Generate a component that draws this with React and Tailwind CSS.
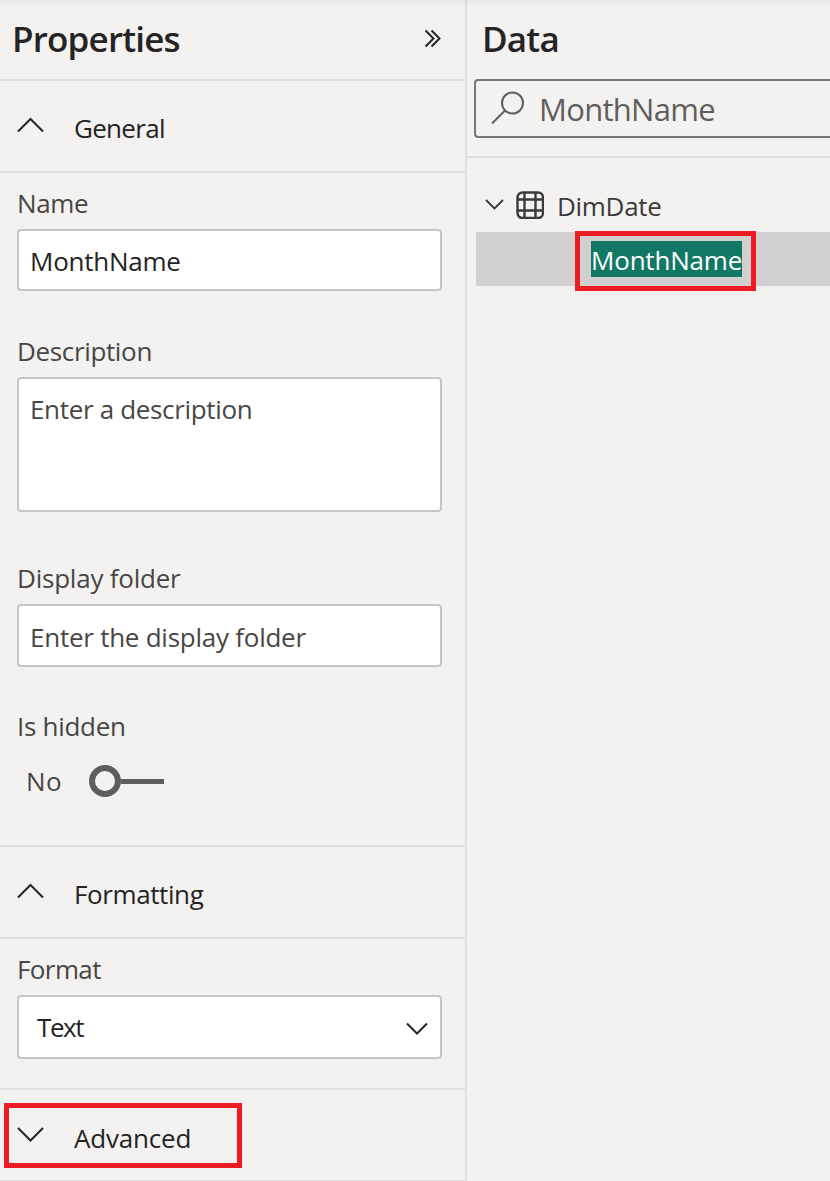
const Chevron = ({ className, width = 28, height = 16, points, stroke = 2 }) => (
  <svg className={className} width={width} height={height} viewBox={`0 0 ${width} ${height}`} fill="none" stroke="currentColor" strokeWidth={stroke}>
    <polyline points={points} />
  </svg>
);

function SectionHeader({ open, children, className = "mt-[29px] tracking-[-0.5px]" }) {
  return (
    <div className="flex h-[92px] shrink-0 items-start border-b-2 border-[#e1dfdd] pl-4 text-[#252423]">
      <Chevron className="mt-9 shrink-0" points={open ? "2,14.5 14.5,2 27,14.5" : "2,2 14.5,14.5 27,2"} />
      <span className={`ml-[30px] ${className}`}>{children}</span>
    </div>
  );
}

function FieldLabel({ children, className }) {
  return <div className={`shrink-0 text-[#484644] ${className}`}>{children}</div>;
}

function Box({ children, className }) {
  return <div className={`w-[425px] shrink-0 rounded-[4px] border-2 border-[#c8c6c4] bg-white ${className}`}>{children}</div>;
}

function PropertiesPane() {
  return (
    <section className="flex w-[467px] shrink-0 flex-col border-r-2 border-[#e1dfdd]">
      <header className="flex h-[81px] shrink-0 items-start justify-between border-b-2 border-[#e1dfdd] pt-[15px] pr-6 pl-3">
        <h1 className="text-[35px] leading-[48px] font-semibold tracking-[-0.8px]">Properties</h1>
        <svg className="mt-[14px]" width="17" height="19" viewBox="0 0 17 19" fill="none" stroke="currentColor" strokeWidth="2">
          <path d="M1.5 1.5 9.5 9.5 1.5 17.5M7.5 1.5 15.5 9.5 7.5 17.5" />
        </svg>
      </header>

      <SectionHeader open className="mt-[29px] tracking-[-0.7px]">General</SectionHeader>
      <div className="flex h-[674px] shrink-0 flex-col border-b-2 border-[#e1dfdd] pl-[17px]">
        <FieldLabel className="mt-3 tracking-[-0.4px]">Name</FieldLabel>
        <Box className="mt-2 h-[62px] pt-3 pl-[11px] tracking-[-0.25px]">MonthName</Box>
        <FieldLabel className="mt-[42px] tracking-[-0.35px]">Description</FieldLabel>
        <Box className="mt-2 h-[135px] pt-3 pl-[11px] tracking-[-0.33px] text-[#484644]">Enter a description</Box>
        <FieldLabel className="mt-12 tracking-[-0.22px]">Display folder</FieldLabel>
        <Box className="mt-2 h-[63px] pt-[13px] pl-[11px] tracking-[-0.25px] text-[#484644]">Enter the display folder</Box>
        <FieldLabel className="mt-[41px] tracking-[-0.3px]">Is hidden</FieldLabel>
        <div className="mt-[19px] flex items-center pl-[9px] text-[#484644]">
          <span className="w-[63px] tracking-[0.3px]">No</span>
          <span className="h-8 w-8 rounded-full border-[6px] border-[#605e5c]" />
          <span className="h-[5px] w-[43px] bg-[#605e5c]" />
        </div>
      </div>

      <SectionHeader open className="mt-[29px] tracking-[-0.4px]">Formatting</SectionHeader>
      <div className="flex h-[151px] shrink-0 flex-col border-b-2 border-[#e1dfdd] pl-[17px]">
        <FieldLabel className="mt-3 tracking-[-0.6px]">Format</FieldLabel>
        <Box className="mt-2 flex h-16 items-start justify-between pt-3 pr-3 pl-[18px]">
          <span className="tracking-[-1.4px]">Text</span>
          <Chevron className="mt-[13px]" width={22} height={13} points="1,1.5 11,11.5 21,1.5" />
        </Box>
      </div>

      <div className="relative">
        <SectionHeader className="mt-[30px] tracking-[-0.2px]">Advanced</SectionHeader>
        <div className="absolute top-[13px] left-1 h-[65px] w-[238px] border-5 border-[#ed1c24]" />
      </div>
    </section>
  );
}

function DataPane() {
  return (
    <section className="flex min-w-0 flex-1 flex-col">
      <header className="h-[158px] border-b-2 border-[#e1dfdd] pt-[15px]">
        <h1 className="pl-[15px] text-[35px] leading-[48px] font-semibold tracking-[-0.8px]">Data</h1>
        <div className="mt-4 ml-[7px] flex h-[59px] items-start rounded-l-[4px] border-2 border-r-0 border-[#797775] text-[#605e5c]">
          <svg className="mt-[10px] ml-[15px] shrink-0" width="34" height="34" viewBox="0 0 34 34" fill="none" stroke="currentColor" strokeWidth="2">
            <circle cx="21.5" cy="12" r="10.5" />
            <path d="M14 19.5 1 32.5" />
          </svg>
          <span className="mt-2 ml-[14px] text-[31px] leading-10 tracking-[-0.7px]">MonthName</span>
        </div>
      </header>
      <div className="flex h-[74px] items-start pl-[18px] text-[#3b3a39]">
        <Chevron className="mt-[41px] shrink-0" width={19} height={12} points="1,1 9.5,9.5 18,1" stroke={1.8} />
        <svg className="mt-[33px] ml-3 shrink-0" width="28" height="28" viewBox="0 0 28 28" fill="none" stroke="currentColor" strokeWidth="2.4">
          <rect x="1.5" y="1.5" width="25.5" height="25.5" rx="5" />
          <path d="M8.5 1v26M19.5 1v26M1 8.5h26M1 19.5h26" />
        </svg>
        <span className="mt-[30px] ml-[13px] tracking-[-0.3px]">DimDate</span>
      </div>
      <div className="relative ml-[9px] flex h-[54px] items-start bg-[#d2d0ce] pt-[9px] pl-[115px]">
        <span className="h-9 w-[151px] bg-[#117865] leading-[38px] tracking-[-0.2px] whitespace-nowrap text-white">MonthName</span>
        <div className="absolute -top-px left-[99px] h-[60px] w-[181px] border-5 border-[#ed1c24]" />
      </div>
    </section>
  );
}

export default function App() {
  return (
    <main className="relative flex h-[1181px] w-[830px] overflow-hidden bg-[#f3f2f1] font-['Open_Sans','Noto_Sans',sans-serif] text-[26px] leading-9 text-[#252423]">
      <PropertiesPane />
      <DataPane />
      <div className="absolute inset-x-0 top-0 h-[6px] bg-linear-to-b from-black/5 to-transparent" />
    </main>
  );
}
